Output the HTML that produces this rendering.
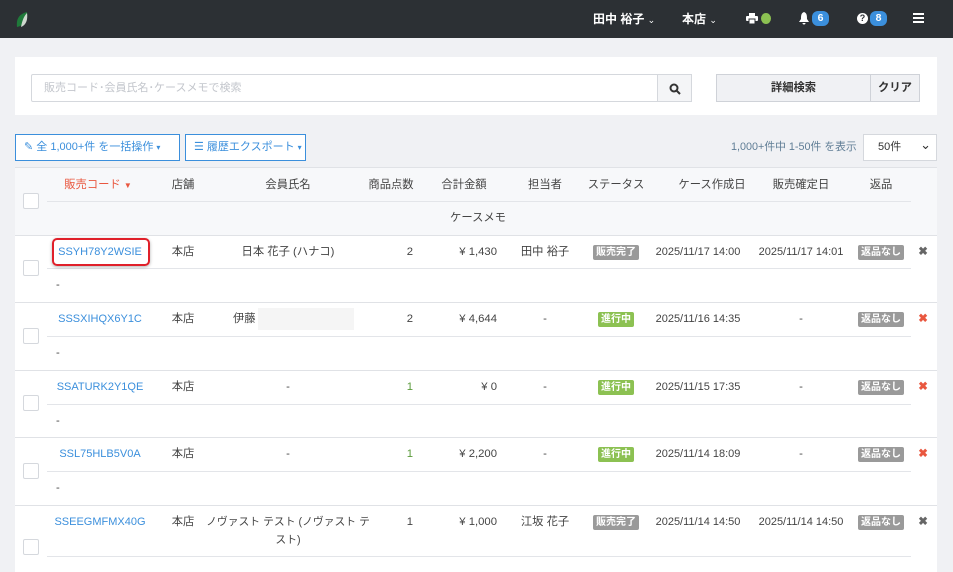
<!DOCTYPE html>
<html><head><meta charset="utf-8"><style>
*{box-sizing:border-box;margin:0;padding:0}
body{width:953px;height:572px;overflow:hidden;background:#f0f1f4;font-family:"Liberation Sans","Noto Sans CJK JP",sans-serif;font-size:11.3px;color:#444;position:relative}
.a{position:absolute;white-space:nowrap;line-height:14px}
.hd{position:absolute;left:0;top:0;width:953px;height:38px;background:#2c3034;color:#fff;font-weight:bold;font-size:12px}
.bdg{display:inline-block;background:#3b8fdc;color:#fff;border-radius:6px;font-size:10.5px;width:17px;height:15px;text-align:center;line-height:15px}
.pnl{position:absolute;background:#fff}
.btn{position:absolute;border:1px solid #3b8fdc;color:#3b8fdc;background:#fff;height:27px;line-height:25px;padding:0 10px;font-size:11.3px;white-space:nowrap;overflow:hidden}
.c{transform:translateX(-50%)}
.r{transform:translateX(-100%)}
.lk{color:#3b8fdc}
.tag{display:inline-block;color:#fff;font-size:10px;font-weight:bold;padding:0 3px;border-radius:2px;height:15px;line-height:15px}
.g{background:#9a9a9a}.gr{background:#8cc152}
.cb{position:absolute;left:23px;width:16px;height:16px;border:1px solid #d5d8dd;background:#fff;border-radius:2px}
.ln{position:absolute;left:47px;width:864px;height:1px;background:#e3e5e9}
.rl{position:absolute;left:15px;width:922px;height:1px;background:#e0e2e6}
.x{font-size:11px}
</style></head><body>
<div class="hd">
<svg class="a" style="left:15px;top:11px" width="16" height="18" viewBox="0 0 16 18"><path d="M2 16 C1 8 4 3 12 1 C13 9 10 14 2 16Z" fill="#1f7a3a"/><path d="M6 16 C7 10 9 5 12 2 C13 9 11 14 6 16Z" fill="#cfd8cf"/></svg>
<span class="a" style="left:593px;top:12px">田中 裕子 <span style="font-weight:normal;font-size:9px">&#8964;</span></span>
<span class="a" style="left:682px;top:12px">本店 <span style="font-weight:normal;font-size:9px">&#8964;</span></span>
<svg class="a" style="left:746px;top:13px" width="12" height="11" viewBox="0 0 12 11"><rect x="3" y="0" width="6" height="3" fill="#fff"/><rect x="0" y="3" width="12" height="5" rx="1" fill="#fff"/><rect x="3" y="6" width="6" height="5" fill="#fff" stroke="#2c3034"/></svg>
<span class="a" style="left:761px;top:13px;width:10px;height:11px;border-radius:50%;background:#8cc152"></span>
<svg class="a" style="left:798px;top:12px" width="12" height="13" viewBox="0 0 12 13"><path d="M6 0C3 1 3 4 3 7L1 10H11L9 7C9 4 9 1 6 0Z M4.5 11a1.5 1.5 0 0 0 3 0Z" fill="#fff"/></svg>
<span class="a bdg" style="left:812px;top:11px">6</span>
<span class="a" style="left:857px;top:13px;width:11px;height:11px;border-radius:50%;background:#fff;color:#2c3034;font-size:9px;text-align:center;line-height:11px">?</span>
<span class="a bdg" style="left:870px;top:11px">8</span>
<span class="a" style="left:913px;top:13px;width:11px;height:10px;border-top:2px solid #fff;border-bottom:2px solid #fff"></span>
<span class="a" style="left:913px;top:17px;width:11px;height:2px;background:#fff"></span>
</div>
<div class="pnl" style="left:15px;top:57px;width:922px;height:58px"></div>
<div class="a" style="left:31px;top:74px;width:627px;height:28px;border:1px solid #d5d8dd;border-radius:2px 0 0 2px;background:#fff;color:#c3c6cc;font-size:11px;line-height:26px;padding-left:12px">販売コード･会員氏名･ケースメモで検索</div>
<div class="a" style="left:657px;top:74px;width:35px;height:28px;border:1px solid #d5d8dd;background:#f4f5f7"><svg style="position:absolute;left:11px;top:8px" width="12" height="12" viewBox="0 0 12 12"><circle cx="5" cy="5" r="3.5" stroke="#333" stroke-width="2" fill="none"/><path d="M7.5 7.5L11 11" stroke="#333" stroke-width="2"/></svg></div>
<div class="a" style="left:716px;top:74px;width:155px;height:28px;border:1px solid #cfd2d8;background:#f0f1f4;text-align:center;line-height:26px;font-weight:bold;color:#333">詳細検索</div>
<div class="a" style="left:870px;top:74px;width:50px;height:28px;border:1px solid #cfd2d8;background:#f0f1f4;text-align:center;line-height:26px;font-weight:bold;color:#333">クリア</div>
<div class="btn" style="left:15px;top:134px;width:165px;padding:0 8px;font-size:11px">&#9998; 全 1,000+件 を一括操作 <span style="font-size:8px">▾</span></div>
<div class="btn" style="left:185px;top:134px;width:121px;padding:0 8px;font-size:11px">&#9776; 履歴エクスポート <span style="font-size:8px">▾</span></div>
<span class="a" style="left:731px;top:140px;color:#5f7d95;font-size:10.8px">1,000+件中 1-50件 を表示</span>
<div class="a" style="left:863px;top:134px;width:74px;height:27px;border:1px solid #d5d8dd;background:#fff;line-height:25px;padding-left:14px;font-size:11px;color:#333">50件<span style="position:absolute;right:5px;top:-3px;font-size:13px">&#8964;</span></div>
<div class="pnl" style="left:15px;top:167px;width:922px;height:405px"></div>
<div class="a" style="left:15px;top:167px;width:922px;height:68px;background:#f7f8fa;border-top:1px solid #e0e2e6"></div>
<div class="cb" style="top:193px"></div>
<div class="ln" style="top:201px"></div>
<span class="a c" style="left:98px;top:178px;color:#e9573f">販売コード <span style="font-size:8px">▼</span></span>
<span class="a c" style="left:183px;top:178px">店舗</span>
<span class="a c" style="left:288px;top:178px">会員氏名</span>
<span class="a c" style="left:391px;top:178px">商品点数</span>
<span class="a c" style="left:464px;top:178px">合計金額</span>
<span class="a c" style="left:545px;top:178px">担当者</span>
<span class="a c" style="left:616px;top:178px">ステータス</span>
<span class="a c" style="left:712px;top:178px">ケース作成日</span>
<span class="a c" style="left:801px;top:178px">販売確定日</span>
<span class="a c" style="left:881px;top:178px">返品</span>
<span class="a c" style="left:478px;top:211px">ケースメモ</span>
<div class="rl" style="top:235px"></div><div class="rl" style="top:302px"></div><div class="rl" style="top:370px"></div><div class="rl" style="top:437px"></div><div class="rl" style="top:505px"></div>

<!-- row1 -->
<div class="cb" style="top:260px"></div><div class="ln" style="top:268px"></div>
<div class="a" style="left:52px;top:238px;width:98px;height:28px;border:2px solid #e0202a;border-radius:5px;box-shadow:0 1px 3px rgba(0,0,0,.3)"></div>
<span class="a c lk x" style="left:100px;top:245px">SSYH78Y2WSIE</span>
<span class="a c" style="left:183px;top:245px">本店</span>
<span class="a c" style="left:288px;top:245px">日本 花子 (ハナコ)</span>
<span class="a r" style="left:413px;top:245px">2</span>
<span class="a r" style="left:497px;top:245px">¥ 1,430</span>
<span class="a c" style="left:545px;top:245px">田中 裕子</span>
<span class="a c tag g" style="left:616px;top:245px">販売完了</span>
<span class="a c x" style="left:698px;top:245px">2025/11/17 14:00</span>
<span class="a c x" style="left:801px;top:245px">2025/11/17 14:01</span>
<span class="a c tag g" style="left:881px;top:245px">返品なし</span>
<span class="a c" style="left:923px;top:245px;color:#666;font-weight:bold">✖</span>
<span class="a" style="left:56px;top:278px">-</span>
<!-- row2 -->
<div class="cb" style="top:328px"></div><div class="ln" style="top:336px"></div>
<span class="a c lk x" style="left:100px;top:312px">SSSXIHQX6Y1C</span>
<span class="a c" style="left:183px;top:312px">本店</span>
<span class="a" style="left:233px;top:312px">伊藤</span>
<span class="a" style="left:258px;top:308px;width:96px;height:22px;background:#f5f5f5"></span>
<span class="a r" style="left:413px;top:312px">2</span>
<span class="a r" style="left:497px;top:312px">¥ 4,644</span>
<span class="a c" style="left:545px;top:312px">-</span>
<span class="a c tag gr" style="left:616px;top:312px">進行中</span>
<span class="a c x" style="left:698px;top:312px">2025/11/16 14:35</span>
<span class="a c" style="left:801px;top:312px">-</span>
<span class="a c tag g" style="left:881px;top:312px">返品なし</span>
<span class="a c" style="left:923px;top:312px;color:#e9573f;font-weight:bold">✖</span>
<span class="a" style="left:56px;top:346px">-</span>
<!-- row3 -->
<div class="cb" style="top:395px"></div><div class="ln" style="top:404px"></div>
<span class="a c lk x" style="left:100px;top:380px">SSATURK2Y1QE</span>
<span class="a c" style="left:183px;top:380px">本店</span>
<span class="a c" style="left:288px;top:380px">-</span>
<span class="a r" style="left:413px;top:380px;color:#5a9a3a">1</span>
<span class="a r" style="left:497px;top:380px">¥ 0</span>
<span class="a c" style="left:545px;top:380px">-</span>
<span class="a c tag gr" style="left:616px;top:380px">進行中</span>
<span class="a c x" style="left:698px;top:380px">2025/11/15 17:35</span>
<span class="a c" style="left:801px;top:380px">-</span>
<span class="a c tag g" style="left:881px;top:380px">返品なし</span>
<span class="a c" style="left:923px;top:380px;color:#e9573f;font-weight:bold">✖</span>
<span class="a" style="left:56px;top:414px">-</span>
<!-- row4 -->
<div class="cb" style="top:463px"></div><div class="ln" style="top:471px"></div>
<span class="a c lk x" style="left:100px;top:447px">SSL75HLB5V0A</span>
<span class="a c" style="left:183px;top:447px">本店</span>
<span class="a c" style="left:288px;top:447px">-</span>
<span class="a r" style="left:413px;top:447px;color:#5a9a3a">1</span>
<span class="a r" style="left:497px;top:447px">¥ 2,200</span>
<span class="a c" style="left:545px;top:447px">-</span>
<span class="a c tag gr" style="left:616px;top:447px">進行中</span>
<span class="a c x" style="left:698px;top:447px">2025/11/14 18:09</span>
<span class="a c" style="left:801px;top:447px">-</span>
<span class="a c tag g" style="left:881px;top:447px">返品なし</span>
<span class="a c" style="left:923px;top:447px;color:#e9573f;font-weight:bold">✖</span>
<span class="a" style="left:56px;top:481px">-</span>
<!-- row5 -->
<div class="cb" style="top:539px"></div><div class="ln" style="top:556px"></div>
<span class="a c lk x" style="left:100px;top:515px">SSEEGMFMX40G</span>
<span class="a c" style="left:183px;top:515px">本店</span>
<span class="a c" style="left:288px;top:515px;font-size:10.8px">ノヴァスト テスト (ノヴァスト テ</span>
<span class="a c" style="left:288px;top:533px;font-size:10.8px">スト)</span>
<span class="a r" style="left:413px;top:515px">1</span>
<span class="a r" style="left:497px;top:515px">¥ 1,000</span>
<span class="a c" style="left:545px;top:515px">江坂 花子</span>
<span class="a c tag g" style="left:616px;top:515px">販売完了</span>
<span class="a c x" style="left:698px;top:515px">2025/11/14 14:50</span>
<span class="a c x" style="left:801px;top:515px">2025/11/14 14:50</span>
<span class="a c tag g" style="left:881px;top:515px">返品なし</span>
<span class="a c" style="left:923px;top:515px;color:#666;font-weight:bold">✖</span>
</body></html>
